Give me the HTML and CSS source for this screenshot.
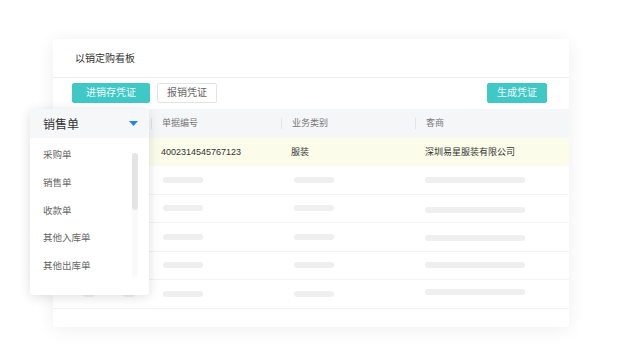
FILE: index.html
```html
<!DOCTYPE html>
<html lang="zh-CN">

<head>
  <meta charset="UTF-8" />
  <meta name="viewport" content="width=device-width, initial-scale=1.0" />
  <title>以销定购看板</title>
  <link rel="stylesheet" href="styles.css">
</head>

<body>
  <div class="stage">
    <div class="board">
      <div class="board-title">以销定购看板</div>
      <div class="toolbar">
        <a class="btn primary" href="javascript:;">进销存凭证</a>
        <a class="btn" href="javascript:;">报销凭证</a>
        <a class="btn primary push" href="javascript:;">生成凭证</a>
      </div>
      <div class="table">
        <div class="row head">
          <div class="cell"></div>
          <div class="cell"><span class="th">单据编号</span></div>
          <div class="cell"><span class="th">业务类别</span></div>
          <div class="cell"><span class="th">客商</span></div>
        </div>
        <div class="row current">
          <div class="cell"></div>
          <div class="cell">4002314545767123</div>
          <div class="cell">服装</div>
          <div class="cell">深圳易星服装有限公司</div>
        </div>
        <div class="row">
          <div class="cell lead"><i class="bar tiny"></i><i class="bar tiny"></i></div>
          <div class="cell"><i class="bar short b1"></i></div>
          <div class="cell"><i class="bar short b2"></i></div>
          <div class="cell"><i class="bar long"></i></div>
        </div>
        <div class="row">
          <div class="cell lead"><i class="bar tiny"></i><i class="bar tiny"></i></div>
          <div class="cell"><i class="bar short b1"></i></div>
          <div class="cell"><i class="bar short b2"></i></div>
          <div class="cell"><i class="bar long low"></i></div>
        </div>
        <div class="row">
          <div class="cell lead"><i class="bar tiny"></i><i class="bar tiny"></i></div>
          <div class="cell"><i class="bar short b1"></i></div>
          <div class="cell"><i class="bar short b2"></i></div>
          <div class="cell"><i class="bar long low"></i></div>
        </div>
        <div class="row">
          <div class="cell lead"><i class="bar tiny"></i><i class="bar tiny"></i></div>
          <div class="cell"><i class="bar short b1"></i></div>
          <div class="cell"><i class="bar short b2"></i></div>
          <div class="cell"><i class="bar long"></i></div>
        </div>
        <div class="row">
          <div class="cell lead"><i class="bar tiny"></i><i class="bar tiny"></i></div>
          <div class="cell"><i class="bar short b1"></i></div>
          <div class="cell"><i class="bar short b2"></i></div>
          <div class="cell"><i class="bar long high"></i></div>
        </div>
      </div>
    </div>

    <!-- 单据类型下拉 -->
    <div class="dropdown">
      <div class="dropdown-head">
        <span>销售单</span>
        <svg class="caret" width="9" height="5" viewBox="0 0 9 5">
          <path d="M0 0 H9 L4.5 5 Z" fill="#1e88f0" />
        </svg>
      </div>
      <div class="dropdown-body">
        <ul class="options">
          <li>采购单</li>
          <li>销售单</li>
          <li>收款单</li>
          <li>其他入库单</li>
          <li>其他出库单</li>
        </ul>
        <div class="scroll">
          <div class="thumb"></div>
        </div>
      </div>
    </div>
  </div>
</body>

</html>
```

FILE: styles.css
```css
* {
  padding: 0;
  margin: 0;
  box-sizing: border-box;
}

body {
  background: #fff;
  font-family: "Liberation Sans", "Noto Sans CJK SC", sans-serif;
  color: #333;
}

.stage {
  position: relative;
  width: 640px;
  height: 360px;
  padding: 39px 0 0 53px;
}

.board {
  width: 516px;
  height: 288px;
  background: #fff;
  border-radius: 3px;
  box-shadow: 0 2px 18px rgba(0, 0, 0, 0.07);
  overflow: hidden;
}

.board-title {
  height: 39px;
  padding-left: 22px;
  line-height: 40px;
  font-size: 10px;
  color: #333;
  border-bottom: 1px solid #ebedf0;
}

.toolbar {
  display: flex;
  gap: 7px;
  height: 31px;
  padding: 5px 22px 0 19px;
}

.btn {
  display: block;
  height: 20px;
  padding: 0 9px;
  line-height: 18px;
  font-size: 10px;
  text-decoration: none;
  color: #666;
  border: 1px solid #e3e3e3;
  border-radius: 2px;
  background: #fff;
}

.btn.primary {
  color: #f2fbfb;
  background: #40c8c6;
  border-color: #40c8c6;
  padding: 0 13px;
}

.btn.primary.push {
  margin-left: auto;
  padding: 0 9px;
}

.row {
  display: grid;
  grid-template-columns: 98px 130px 134px 1fr;
  align-items: center;
  height: 28.5px;
  border-bottom: 1px solid #f2f3f4;
  font-size: 9px;
}

.row.head {
  background: #f5f6f8;
  border-bottom: none;
  color: #777;
}

.row.current {
  background: #fbfdea;
  border-bottom: none;
}

.cell {
  padding-left: 10px;
}

.th {
  display: block;
  height: 11px;
  line-height: 11px;
  margin-left: -10px;
  padding-left: 10px;
  border-left: 1px solid #e2e4e7;
}

.cell.lead {
  display: flex;
  gap: 28px;
  padding-left: 30px;
}

.bar {
  display: block;
  height: 6px;
  border-radius: 3px;
  background: #efefef;
}

.bar.tiny {
  width: 12px;
}

.bar.short {
  width: 40px;
}

.bar.b1 {
  margin-left: 2px;
}

.bar.b2 {
  margin-left: 3px;
}

.bar.long {
  width: 100px;
}

.bar.low {
  margin-top: 3px;
}

.bar.high {
  margin-top: -3px;
}

.dropdown {
  position: absolute;
  top: 109px;
  left: 30px;
  width: 119px;
  height: 186px;
  background: #fff;
  border-radius: 3px;
  box-shadow: 0 2px 12px rgba(0, 0, 0, 0.13);
  overflow: hidden;
}

.dropdown-head {
  display: flex;
  align-items: center;
  justify-content: space-between;
  height: 29px;
  padding: 0 11px 0 13px;
  background: #f6f7f9;
  font-size: 12px;
  color: #333;
}

.dropdown-body {
  display: flex;
}

.options {
  flex: 1;
  list-style: none;
  padding-top: 3px;
}

.options li {
  height: 27.8px;
  line-height: 27.8px;
  padding-left: 13px;
  font-size: 9.5px;
  color: #666;
}

.scroll {
  width: 6px;
  height: 124px;
  margin: 15px 11px 0 0;
  border-radius: 3px;
  background: #fafafa;
}

.thumb {
  height: 57px;
  border-radius: 3px;
  background: #e5e5e5;
}
```
